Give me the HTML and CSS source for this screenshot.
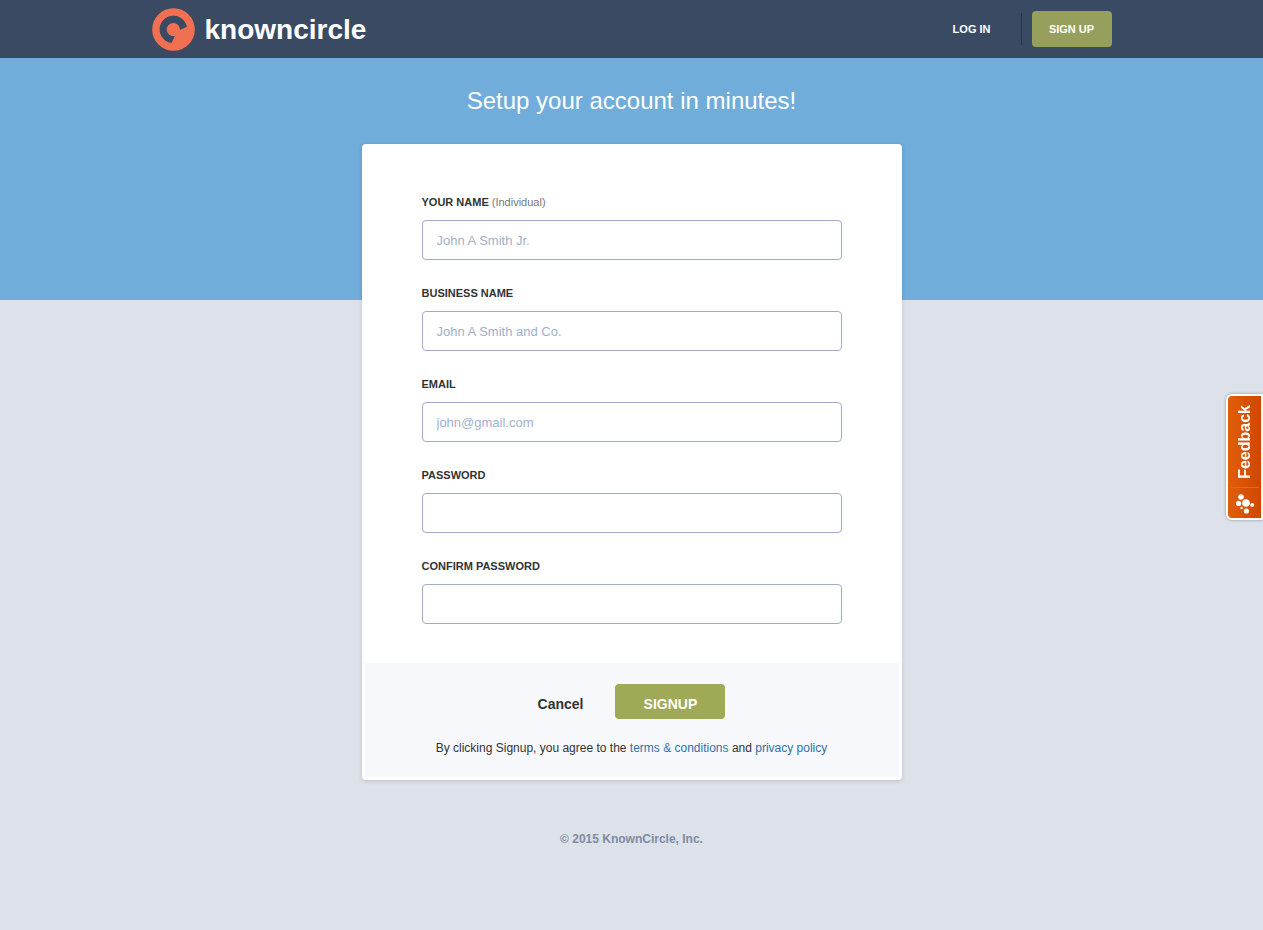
FILE: index.html
```html
<!DOCTYPE html>
<html lang="en">
<head>
<meta charset="utf-8">
<meta name="viewport" content="width=device-width, initial-scale=1">
<title>KnownCircle - Sign Up</title>
<link rel="stylesheet" href="styles.css">
</head>
<body>
<header class="topbar">
  <div class="topbar-inner">
    <a class="brand" href="#">
      <svg class="brand-mark" viewBox="0.5 0.5 43 43" aria-hidden="true">
        <circle cx="22" cy="22" r="21.3" fill="#f27052"/>
        <path d="M20 35.6A13.8 13.8 0 1 1 35.4 19.2L28.4 22.6A6.6 6.6 0 1 0 23.4 28.4Z" fill="#3a4a63"/>
      </svg>
      <span class="brand-name">knowncircle</span>
    </a>
    <nav class="topnav">
      <a class="login" href="#">LOG IN</a>
      <a class="signup-link" href="#">SIGN UP</a>
    </nav>
  </div>
</header>
<main class="page">
  <h1 class="title">Setup your account in minutes!</h1>
  <form class="card">
    <div class="fields">
      <div class="field">
        <label for="name">YOUR NAME <span class="hint">(Individual)</span></label>
        <input id="name" type="text" placeholder="John A Smith Jr.">
      </div>
      <div class="field">
        <label for="business">BUSINESS NAME</label>
        <input id="business" type="text" placeholder="John A Smith and Co.">
      </div>
      <div class="field">
        <label for="email">EMAIL</label>
        <input id="email" type="email" placeholder="john@gmail.com">
      </div>
      <div class="field">
        <label for="password">PASSWORD</label>
        <input id="password" type="password">
      </div>
      <div class="field">
        <label for="confirm">CONFIRM PASSWORD</label>
        <input id="confirm" type="password">
      </div>
    </div>
    <div class="card-footer">
      <div class="actions">
        <button class="cancel" type="button">Cancel</button>
        <button class="submit" type="submit">SIGNUP</button>
      </div>
      <p class="terms">By clicking Signup, you agree to the <a href="#">terms &amp; conditions</a> and <a href="#">privacy policy</a></p>
    </div>
  </form>
</main>
<footer class="copyright">© 2015 KnownCircle, Inc.</footer>
<button class="feedback" type="button">
  <span class="feedback-text">Feedback</span>
  <svg class="feedback-icon" viewBox="0 0 20 22" aria-hidden="true">
    <g fill="#fff">
      <circle cx="6" cy="4" r="2.8"/>
      <circle cx="3.6" cy="10.4" r="2.6"/>
      <circle cx="11" cy="10" r="3.8"/>
      <circle cx="17.2" cy="12" r="2"/>
      <circle cx="6.6" cy="15" r="1.2"/>
      <circle cx="11.4" cy="18" r="2.6"/>
    </g>
  </svg>
</button>
</body>
</html>
```
FILE: styles.css
```css
* {
  box-sizing: border-box;
}

body {
  margin: 0;
  min-height: 100vh;
  background: #dde1e9 linear-gradient(#71addb, #71addb) no-repeat 0 0 / 100% 300px;
  color: #333;
  font-family: "Liberation Sans", Arial, sans-serif;
  font-size: 12px;
}

a {
  text-decoration: none;
}

input,
button {
  font-family: inherit;
}

.topbar {
  background: #3a4a63;
}

.topbar-inner {
  display: flex;
  justify-content: space-between;
  align-items: center;
  max-width: 960px;
  height: 58px;
  margin: 0 auto;
}

.brand {
  display: flex;
  align-items: center;
  gap: 10px;
  color: #fff;
}

.brand-mark {
  width: 43px;
  height: 43px;
}

.brand-name {
  padding-top: 2px;
  font-size: 28px;
  line-height: 32px;
  font-weight: bold;
}

.topnav {
  display: flex;
  align-items: center;
  gap: 10px;
  font-size: 11px;
  font-weight: bold;
}

.topnav a {
  color: #fff;
}

.login {
  padding-right: 30px;
  border-right: 1px solid #2b3546;
  line-height: 32px;
}

.signup-link {
  width: 80px;
  border-radius: 4px;
  background: #969f5c;
  line-height: 36px;
  text-align: center;
}

.page {
  padding: 28px 16px 0;
}

.title {
  margin: 0 0 28px;
  color: #fff;
  font-size: 24px;
  line-height: 30px;
  font-weight: normal;
  text-align: center;
}

.card {
  max-width: 540px;
  margin: 0 auto;
  padding: 0 3px 3px;
  border-radius: 4px;
  background: #fff;
  box-shadow: 0 1px 4px rgba(0, 0, 0, 0.15);
}

.fields {
  display: flex;
  flex-direction: column;
  gap: 25px;
  padding: 50px 57px 39px;
}

.field {
  display: flex;
  flex-direction: column;
  gap: 10px;
}

.field label {
  font-size: 11px;
  line-height: 16px;
  font-weight: bold;
}

.hint {
  color: #777;
  font-weight: normal;
}

.field input {
  width: 100%;
  height: 40px;
  padding: 0 14px;
  border: 1px solid #a0abc6;
  border-radius: 4px;
  background: #fff;
  color: #333;
  font-size: 13px;
}

.field input::placeholder {
  color: #a0b0cf;
  opacity: 1;
}

.card-footer {
  padding: 21px 16px;
  background: #f6f8fc;
  text-align: center;
}

.actions {
  display: flex;
  justify-content: center;
  gap: 32px;
}

.actions button {
  height: 35px;
  padding: 4px 0 0;
  border: 0;
  font-size: 14px;
  font-weight: bold;
}

.cancel {
  background: none;
  color: #333;
}

.actions .submit {
  width: 110px;
  border-radius: 4px;
  background: #a0a955;
  color: #fff;
}

.terms {
  margin: 21px 0 0;
  font-size: 12px;
  line-height: 16px;
}

.terms a {
  color: #2f72ad;
}

.copyright {
  padding: 51px 0;
  color: #7d8ba5;
  font-weight: bold;
  line-height: 16px;
  text-align: center;
}

.feedback {
  position: fixed;
  top: 394px;
  right: 0;
  display: flex;
  flex-direction: column;
  align-items: center;
  width: 37px;
  padding: 9px 0 2px;
  border: 2px solid #fff;
  border-radius: 6px 0 0 6px;
  background: linear-gradient(90deg, #e05f0a, #d14600);
  box-shadow: 0 0 3px rgba(0, 0, 0, 0.4);
  color: #fff;
}

.feedback-text {
  font-size: 16px;
  line-height: 18px;
  font-weight: bold;
  writing-mode: vertical-rl;
  transform: rotate(180deg);
}

.feedback-icon {
  width: 28px;
  height: 29px;
  margin-top: 8px;
  padding: 5px 3px 1px;
  border-top: 1px solid #ea6a1c;
}
```
